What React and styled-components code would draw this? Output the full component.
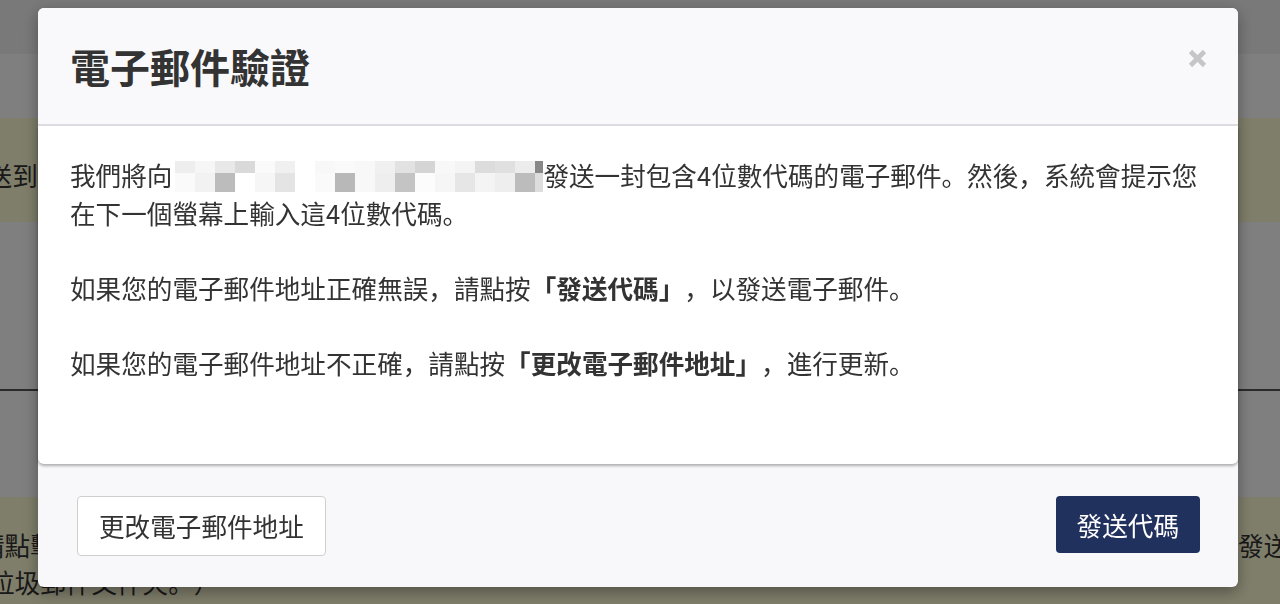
import React from 'react'
import styled, { createGlobalStyle } from 'styled-components'

const GlobalStyle = createGlobalStyle`
    html, body {
        margin: 0;
        padding: 0;
        overflow: hidden;
    }
    body {
        font-family: "Noto Sans CJK SC", "Noto Sans CJK TC", sans-serif;
        color: #333;
        text-spacing-trim: space-all;
    }
`;

// page behind the dialog
const Page = styled.div`
    height: 604px;
    overflow: hidden;
    background-color: #fff;
    font-size: 25.6px;
    line-height: 37.5px;
    color: #333;
`;

const TopBar = styled.div`
    height: 54px;
    background-color: #f3f3f3;
`;

const Nav = styled.div`
    height: 64px;
    background-color: #fff;
`;

const Notice = styled.div`
    background-color: #fefcd6;
    padding: 38px 0 28px 0;
    white-space: nowrap;
    overflow: hidden;
`;

const Section = styled.div`
    height: 167px;
    border-bottom: 2px solid #555;
`;

const Spacer = styled.div`
    height: 106px;
`;

const Hint = styled.div`
    background-color: #fefcd6;
    padding: 29px 0;
    white-space: nowrap;
    overflow: hidden;
`;

const HintRow = styled.div`
    display: grid;
    grid-template-columns: 1238px 1fr;
`;

const Cut = styled.span`
    display: block;
    margin-left: ${p => p.$shift}px;
`;

// dialog
const Overlay = styled.div`
    position: fixed;
    inset: 0;
    background-color: rgba(0, 0, 0, 0.5);
    display: flex;
    align-items: flex-start;
    padding: 8px 0 0 38px;
`;

const Modal = styled.div`
    width: 1200px;
    border-radius: 6px;
    background-color: #f8f8fb;
    box-shadow: 0 5px 15px rgba(0, 0, 0, 0.35);
`;

const Header = styled.div`
    display: flex;
    justify-content: space-between;
    align-items: flex-start;
    padding: 28px 31px 28px 32px;
    background-color: #f9f9fb;
    border-bottom: 2px solid #dedee2;
    border-radius: 6px 6px 0 0;
`;

const Title = styled.h2`
    margin: 0;
    font-size: 40px;
    line-height: 60px;
    font-weight: 700;
    color: #333;
`;

const Close = styled.button`
    margin-top: 13px;
    padding: 0;
    border: none;
    background: none;
    width: 19px;
    height: 19px;
    display: flex;
    svg {
        display: block;
    }
`;

const Body = styled.div`
    position: relative;
    z-index: 1;
    padding: 30px 32px 83px 32px;
    background-color: #fff;
    border-radius: 0 0 6px 6px;
    box-shadow: 0 2px 3px rgba(0, 0, 0, 0.3);
    font-size: 25.6px;
    line-height: 37.5px;
    color: #333;
    text-spacing-trim: space-all;
    p {
        margin: 0 0 37.5px 0;
    }
    p:last-child {
        margin-bottom: 0;
    }
    strong {
        font-weight: 700;
    }
`;

const Redacted = styled.span`
    display: inline-grid;
    vertical-align: top;
    margin: 4.5px 0 0 3px;
    grid-template-columns: repeat(18, 20px) 8px;
    grid-template-rows: 12px 19px;
`;

const Pixel = styled.span`
    background-color: ${p => p.$shade};
`;

const Footer = styled.div`
    display: flex;
    justify-content: space-between;
    align-items: flex-start;
    padding: 32px 38px 31px 39px;
    border-radius: 0 0 6px 6px;
`;

const Button = styled.button`
    font-family: "Noto Sans CJK SC", "Noto Sans CJK TC", sans-serif;
    font-size: 25.6px;
    line-height: ${p => p.$primary ? '33px' : '32px'};
    padding: ${p => p.$primary ? '12px 21px' : '13px 21px'};
    border: ${p => p.$primary ? 'none' : '1px solid #cfcfcf'};
    border-radius: 4px;
    background-color: ${p => p.$primary ? '#21315e' : '#fff'};
    color: ${p => p.$primary ? '#fff' : '#333'};
    cursor: pointer;
`;

const topRow = ['#eee', '#f6f6f6', '#e8e8e8', '#d9d9d9', '#fafafa', '#f0f0f0', '#fff', '#f8f8f8', '#fafafa', '#f8f8f8',
    '#f0f0f0', '#e2e2e2', '#d5d5d5', '#f8f8f8', '#f4f4f4', '#dcdcdc', '#e0e0e0', '#ececec', '#888'];
const bottomRow = ['#fafafa', '#f2f2f2', '#bcbcbc', '#fff', '#f6f6f6', '#e4e4e4', '#fff', '#fafafa', '#b8b8b8', '#f8f8f8',
    '#eeeeee', '#c4c4c4', '#fcfcfc', '#f6f6f6', '#e6e6e6', '#f4f4f4', '#eee', '#bcbcbc', '#ddd'];

export default function App() {
    return (
        <>
            <GlobalStyle />
            <Page>
                <TopBar />
                <Nav />
                <Notice>
                    <Cut $shift={-39}>發送到您的電子郵件地址</Cut>
                </Notice>
                <Section />
                <Spacer />
                <Hint>
                    <HintRow>
                        <Cut $shift={-21}>請點擊下方按鈕</Cut>
                        <span>發送</span>
                    </HintRow>
                    <Cut $shift={-11}>垃圾郵件文件夾。）</Cut>
                </Hint>
            </Page>
            <Overlay>
                <Modal>
                    <Header>
                        <Title>電子郵件驗證</Title>
                        <Close aria-label="close">
                            <svg width="19" height="19" viewBox="0 0 19 19">
                                <path d="M2.5 2.5 L16.5 16.5 M16.5 2.5 L2.5 16.5" stroke="#c6c6c8" strokeWidth="4.6" />
                            </svg>
                        </Close>
                    </Header>
                    <Body>
                        <p>
                            我們將向
                            <Redacted>
                                {topRow.map((c, i) => <Pixel key={'t' + i} $shade={c} />)}
                                {bottomRow.map((c, i) => <Pixel key={'b' + i} $shade={c} />)}
                            </Redacted>
                            發送一封包含4位數代碼的電子郵件。然後，系統會提示您在下一個螢幕上輸入這4位數代碼。
                        </p>
                        <p>如果您的電子郵件地址正確無誤，請點按<strong>「發送代碼」</strong>，以發送電子郵件。</p>
                        <p>如果您的電子郵件地址不正確，請點按<strong>「更改電子郵件地址」</strong>，進行更新。</p>
                    </Body>
                    <Footer>
                        <Button>更改電子郵件地址</Button>
                        <Button $primary>發送代碼</Button>
                    </Footer>
                </Modal>
            </Overlay>
        </>
    )
}
